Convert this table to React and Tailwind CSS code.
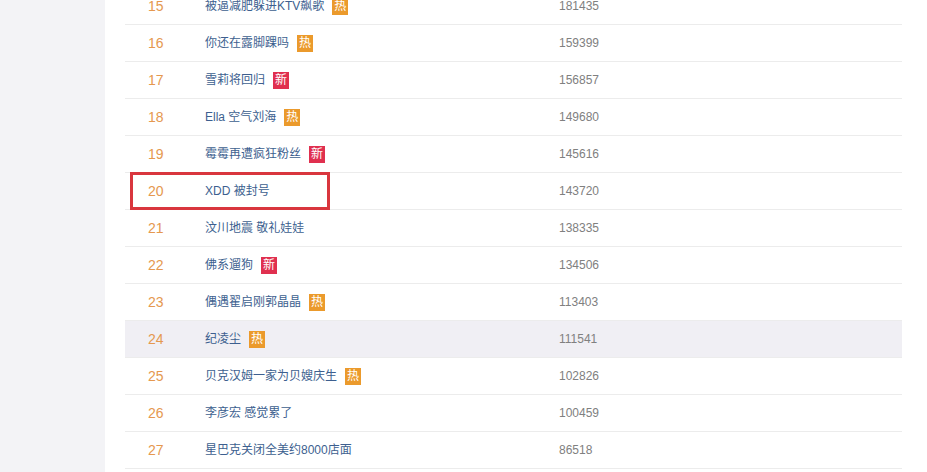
const ROWS = [
  { rank: 15, title: '被逼减肥躲进KTV飙歌', tag: 'hot', count: 181435 },
  { rank: 16, title: '你还在露脚踝吗', tag: 'hot', count: 159399 },
  { rank: 17, title: '雪莉将回归', tag: 'new', count: 156857 },
  { rank: 18, title: 'Ella 空气刘海', tag: 'hot', count: 149680 },
  { rank: 19, title: '霉霉再遭疯狂粉丝', tag: 'new', count: 145616 },
  { rank: 20, title: 'XDD 被封号', tag: null, count: 143720 },
  { rank: 21, title: '汶川地震 敬礼娃娃', tag: null, count: 138335 },
  { rank: 22, title: '佛系遛狗', tag: 'new', count: 134506 },
  { rank: 23, title: '偶遇翟启刚郭晶晶', tag: 'hot', count: 113403 },
  { rank: 24, title: '纪凌尘', tag: 'hot', count: 111541, active: true },
  { rank: 25, title: '贝克汉姆一家为贝嫂庆生', tag: 'hot', count: 102826 },
  { rank: 26, title: '李彦宏 感觉累了', tag: null, count: 100459 },
  { rank: 27, title: '星巴克关闭全美约8000店面', tag: null, count: 86518 },
];

function Tag({ type }) {
  if (!type) return null;
  const hot = type === 'hot';
  return (
    <span
      className={`ml-2 inline-flex h-[17px] w-[16px] items-center justify-center text-[12px] leading-none text-white ${hot ? 'bg-[#eb9a2c]' : 'bg-[#e0304f]'}`}
    >
      {hot ? '热' : '新'}
    </span>
  );
}

export default function App() {
  return (
    <div
      className="flex h-[472px] w-[927px] overflow-hidden bg-white"
      style={{ fontFamily: '"Liberation Sans", "Noto Sans CJK SC", sans-serif' }}
    >
      {/* Left rail */}
      <div className="w-[105px] shrink-0 bg-[#f3f3f6]" />

      {/* List */}
      <div className="relative flex-1 pl-[20px]">
        <div className="-mt-[12px] w-[777px]">
          {ROWS.map(r => (
            <div
              key={r.rank}
              className={`flex h-[37px] items-center border-b border-[#ececec] ${r.active ? 'bg-[#f0eff4]' : ''}`}
            >
              <div className="w-[80px] pl-[23px] text-[14px] text-[#e5984f]">{r.rank}</div>
              <div className="flex w-[354px] items-center text-[12px] text-[#3d5f8f]">
                <span>{r.title}</span>
                <Tag type={r.tag} />
              </div>
              <div className="text-[12px] text-[#808080]">{r.count}</div>
            </div>
          ))}
        </div>

        {/* highlight box around rank 20 */}
        <div className="absolute left-[25px] top-[172px] h-[38px] w-[200px] border-[3px] border-[#d9363e]" />
      </div>
    </div>
  );
}
